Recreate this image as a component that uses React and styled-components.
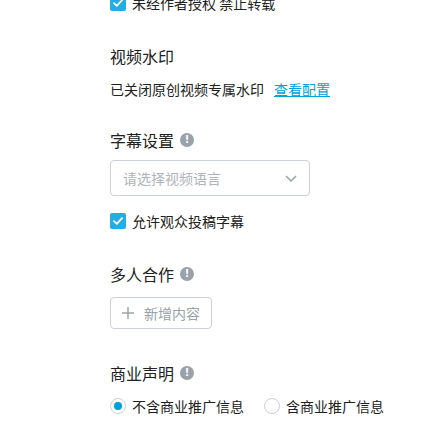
import styled, { createGlobalStyle } from "styled-components";

const GlobalStyle = createGlobalStyle`
  html, body {
    margin: 0;
    padding: 0;
    background: #fff;
    overflow: hidden;
  }
  body {
    font-family: "Noto Sans CJK SC", "Noto Sans", sans-serif;
    color: #212121;
  }
`;

const Page = styled.div`
  width: 440px;
  height: 440px;
  padding-left: 110px;
  box-sizing: border-box;
  overflow: hidden;
`;

const Section = styled.div`
  margin-top: ${(p) => p.$top || 0}px;
`;

const Title = styled.div`
  display: flex;
  align-items: center;
  gap: 6px;
  font-size: 16px;
  line-height: 22px;
  height: 22px;
`;

const Info = styled.span`
  width: 14px;
  height: 14px;
  border-radius: 50%;
  background: #99a2aa;
  color: #fff;
  display: inline-flex;
  align-items: center;
  justify-content: center;
  font-size: 10px;
  font-weight: bold;
  line-height: 1;
  font-family: "DejaVu Sans", sans-serif;
`;

const Text = styled.div`
  font-size: 14px;
  line-height: 20px;
  margin-top: ${(p) => p.$top || 0}px;
`;

const Link = styled.a`
  color: #00a1d6;
  text-decoration: underline;
  margin-left: 10px;
  cursor: pointer;
`;

const CheckRow = styled.label`
  display: flex;
  align-items: center;
  gap: 6px;
  height: 16px;
  font-size: 14px;
  margin-top: ${(p) => p.$top || 0}px;
`;

const Box = styled.span`
  width: 16px;
  height: 16px;
  border-radius: 2px;
  background: #23ade5;
  display: inline-flex;
  align-items: center;
  justify-content: center;
  flex-shrink: 0;
`;

const Select = styled.div`
  width: 200px;
  height: 36px;
  box-sizing: border-box;
  border: 1px solid #ccd0d7;
  border-radius: 4px;
  margin-top: 9px;
  padding: 0 12px;
  display: flex;
  align-items: center;
  justify-content: space-between;
  font-size: 14px;
  color: #b0b4ba;
`;

const AddButton = styled.div`
  width: 102px;
  height: 32px;
  box-sizing: border-box;
  border: 1px solid #ccd0d7;
  border-radius: 4px;
  margin-top: 12px;
  padding-left: 11px;
  display: flex;
  align-items: center;
  gap: 10px;
  font-size: 14px;
  color: #99a2aa;
`;

const RadioGroup = styled.div`
  display: flex;
  align-items: center;
  margin-top: 14px;
  height: 16px;
`;

const RadioItem = styled.label`
  display: flex;
  align-items: center;
  gap: 6px;
  font-size: 14px;
  margin-right: 20px;
`;

const Radio = styled.span`
  width: 16px;
  height: 16px;
  box-sizing: border-box;
  border-radius: 50%;
  border: 1px solid #ccd0d7;
  display: inline-flex;
  align-items: center;
  justify-content: center;
  &::after {
    content: "";
    width: 8px;
    height: 8px;
    border-radius: 50%;
    background: ${(p) => (p.$checked ? "#00a1d6" : "transparent")};
  }
`;

const Check = () => (
  <Box>
    <svg width="10" height="8" viewBox="0 0 10 8">
      <path d="M1 4.2 L3.8 6.8 L9 1.2" fill="none" stroke="#fff" strokeWidth="1.8" strokeLinecap="round" strokeLinejoin="round" />
    </svg>
  </Box>
);

export default function App() {
  return (
    <Page>
      <GlobalStyle />
      <CheckRow $top={-5}>
        <Check />
        未经作者授权 禁止转载
      </CheckRow>

      <Section $top={34}>
        <Title>视频水印</Title>
        <Text $top={12}>
          已关闭原创视频专属水印<Link>查看配置</Link>
        </Text>
      </Section>

      <Section $top={30}>
        <Title>
          字幕设置<Info>!</Info>
        </Title>
        <Select>
          请选择视频语言
          <svg width="12" height="7" viewBox="0 0 12 7">
            <path d="M1 1 L6 6 L11 1" fill="none" stroke="#99a2aa" strokeWidth="1.5" />
          </svg>
        </Select>
        <CheckRow $top={17}>
          <Check />
          允许观众投稿字幕
        </CheckRow>
      </Section>

      <Section $top={34}>
        <Title>
          多人合作<Info>!</Info>
        </Title>
        <AddButton>
          <svg width="12" height="12" viewBox="0 0 12 12">
            <path d="M6 0 V12 M0 6 H12" stroke="#99a2aa" strokeWidth="1.4" />
          </svg>
          新增内容
        </AddButton>
      </Section>

      <Section $top={33}>
        <Title>
          商业声明<Info>!</Info>
        </Title>
        <RadioGroup>
          <RadioItem>
            <Radio $checked />
            不含商业推广信息
          </RadioItem>
          <RadioItem>
            <Radio />
            含商业推广信息
          </RadioItem>
        </RadioGroup>
      </Section>
    </Page>
  );
}
